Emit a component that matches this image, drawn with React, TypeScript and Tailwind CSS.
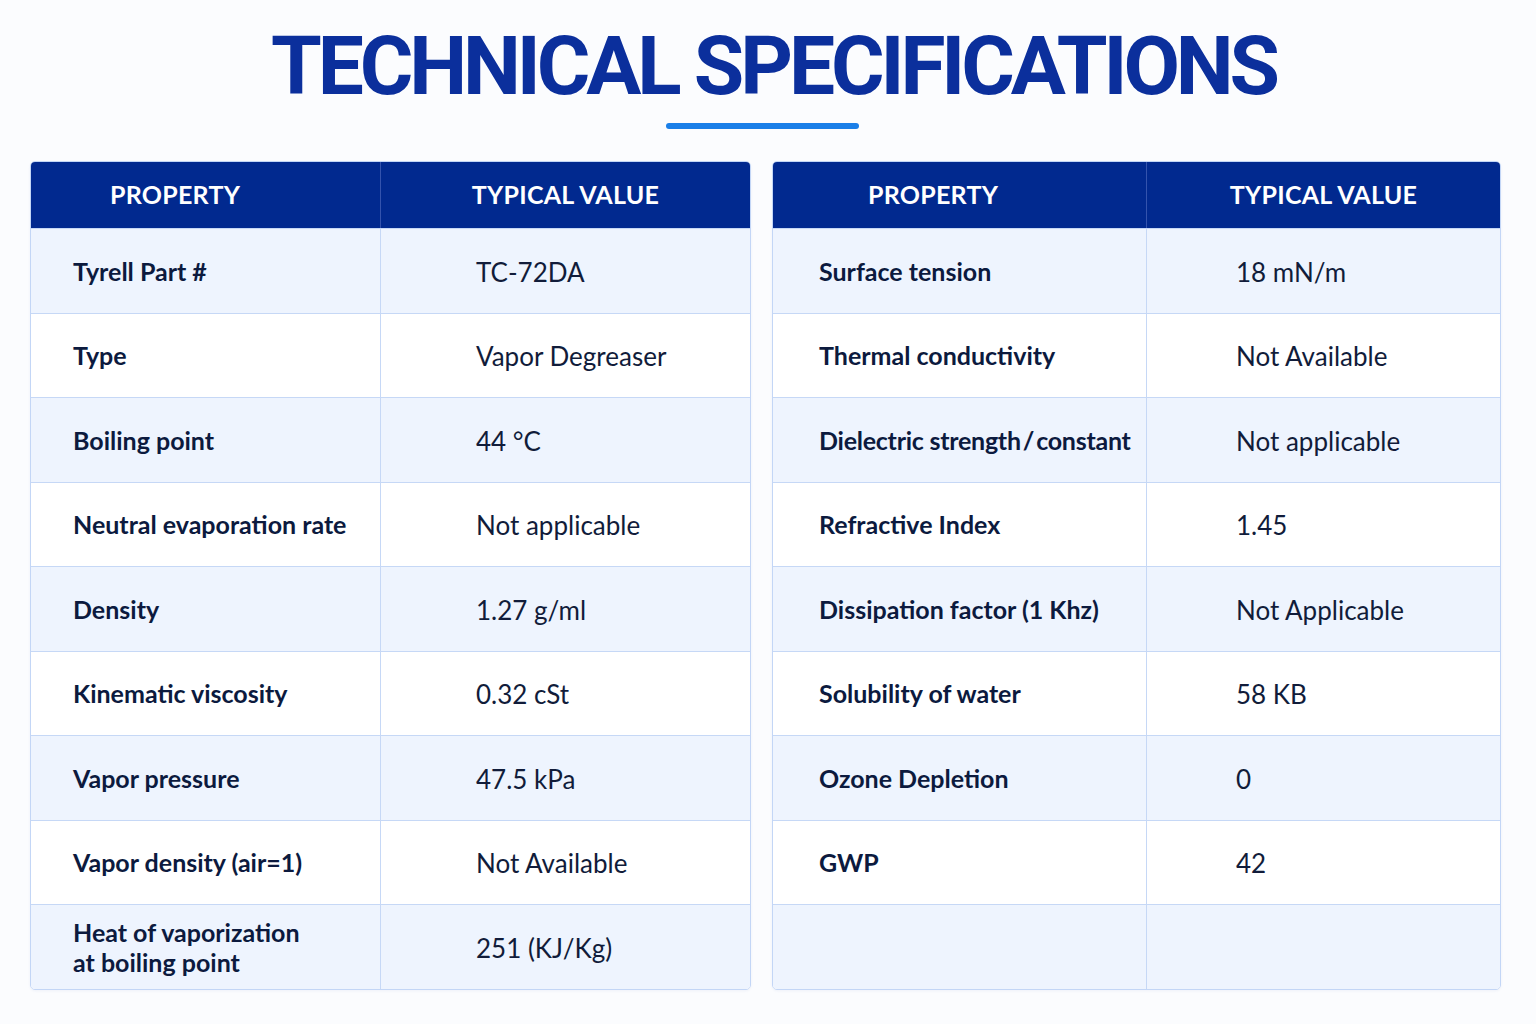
import React from "react";

// ============================================================
// DATA
// ============================================================

type Row = { prop: React.ReactNode; value: string };

const leftRows: Row[] = [
  { prop: "Tyrell Part #", value: "TC-72DA" },
  { prop: "Type", value: "Vapor Degreaser" },
  { prop: "Boiling point", value: "44 °C" },
  { prop: "Neutral evaporation rate", value: "Not applicable" },
  { prop: "Density", value: "1.27 g/ml" },
  { prop: "Kinematic viscosity", value: "0.32 cSt" },
  { prop: "Vapor pressure", value: "47.5 kPa" },
  { prop: "Vapor density (air=1)", value: "Not Available" },
  {
    prop: (
      <>
        Heat of vaporization
        <br />
        at boiling point
      </>
    ),
    value: "251 (KJ/Kg)",
  },
];

const rightRows: Row[] = [
  { prop: "Surface tension", value: "18 mN/m" },
  { prop: "Thermal conductivity", value: "Not Available" },
  {
    prop: (
      <span className="tracking-[-0.01em]">
        Dielectric strength<span className="mx-[2px]">/</span>constant
      </span>
    ),
    value: "Not applicable",
  },
  { prop: "Refractive Index", value: "1.45" },
  { prop: "Dissipation factor (1 Khz)", value: "Not Applicable" },
  { prop: "Solubility of water", value: "58 KB" },
  { prop: "Ozone Depletion", value: "0" },
  { prop: "GWP", value: "42" },
  { prop: "", value: "" },
];

// ============================================================
// TABLE
// ============================================================

const SpecTable = ({
  rows,
  side,
}: {
  rows: Row[];
  side: "left" | "right";
}) => {
  const isLeft = side === "left";
  const firstCol = isLeft ? "w-[350px]" : "w-[374px]";
  const propPad = isLeft ? "pl-[42px]" : "pl-[46px]";
  const valPad = isLeft ? "pl-[95px]" : "pl-[89px]";
  const headPad = isLeft ? "pl-[79px]" : "pl-[95px]";

  return (
    <div className="rounded-[5px] border border-[#c3d6f6] overflow-hidden shadow-[0_1px_3px_rgba(30,64,175,0.06)]">
      <div className="flex h-[66px] bg-[#01298f] text-white font-bold text-[25px] tracking-[0.01em]">
        <div className={`${firstCol} ${headPad} flex items-center border-r border-[#3453ad]`}>
          PROPERTY
        </div>
        <div className="flex-1 flex items-center justify-center">
          TYPICAL VALUE
        </div>
      </div>
      {rows.map((r, i) => (
        <div
          key={i}
          className={`flex h-[84.5px] border-t border-[#c6d8f6] ${
            i % 2 === 0 ? "bg-[#eef4fe]" : "bg-white"
          }`}
        >
          <div
            className={`${firstCol} ${propPad} flex items-center border-r border-[#c6d8f6] font-bold text-[25px] leading-[30px] text-[#0c1a3e]`}
          >
            <span>{r.prop}</span>
          </div>
          <div
            className={`flex-1 ${valPad} flex items-center text-[26px] leading-[30px] pt-[2px] text-[#111c3a]`}
          >
            {r.value}
          </div>
        </div>
      ))}
    </div>
  );
};

// ============================================================
// COMPONENT
// ============================================================

const App = () => {
  return (
    <div
      className="min-h-screen w-[1536px] h-[1024px] bg-[#fbfcfe]"
      style={{ fontFamily: "Lato, 'Noto Sans', sans-serif" }}
    >
      <div className="flex flex-col items-center pt-[22px]">
        <h1
          className="ml-[11px] text-[82px] leading-[88px] font-bold tracking-[-0.05em] text-[#0b2f9c]"
          style={{ fontFamily: "Roboto, 'Liberation Sans', sans-serif" }}
        >
          TECHNICAL SPECIFICATIONS
        </h1>
        <div className="mt-[13px] mr-[11px] h-[6px] w-[193px] rounded-full bg-[#1a7fe8]" />
      </div>

      <div className="mt-[32px] ml-[30px] flex gap-[21px]">
        <div className="w-[721px]">
          <SpecTable rows={leftRows} side="left" />
        </div>
        <div className="w-[729px]">
          <SpecTable rows={rightRows} side="right" />
        </div>
      </div>
    </div>
  );
};

export default App;
